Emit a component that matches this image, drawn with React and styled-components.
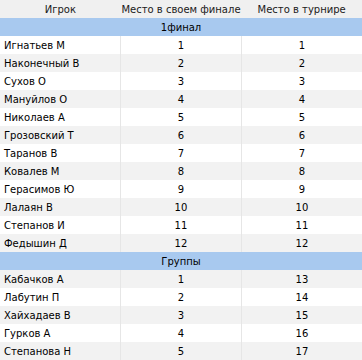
import React from "react";
import styled, { createGlobalStyle } from "styled-components";

const Global = createGlobalStyle`
  body {
    margin: 0;
    background: #ffffff;
    font-family: "DejaVu Sans", Verdana, sans-serif;
    font-size: 10px;
    color: #000000;
  }
`;

const Table = styled.table`
  width: 362px;
  border-collapse: collapse;
  table-layout: fixed;
`;

const HeadCell = styled.th`
  height: 18px;
  padding: 0;
  background: #f0f0f0;
  font-weight: normal;
  text-align: center;
  color: #1a1a1a;
`;

const Row = styled.tr`
  background: ${(p) => (p.$gray ? "#f2f2f2" : "#ffffff")};
`;

const SectionRow = styled.tr`
  background: #a8c9ef;
`;

const SectionCell = styled.td`
  height: 18px;
  padding: 0;
  text-align: center;
`;

const Cell = styled.td`
  height: 18px;
  padding: 0 4px;
  text-align: ${(p) => (p.$left ? "left" : "center")};
  border-left: ${(p) => (p.$first ? "none" : "1px solid #e6e6e6")};
  white-space: nowrap;
`;

const finalRows = [
  ["Игнатьев М", 1, 1],
  ["Наконечный В", 2, 2],
  ["Сухов О", 3, 3],
  ["Мануйлов О", 4, 4],
  ["Николаев А", 5, 5],
  ["Грозовский Т", 6, 6],
  ["Таранов В", 7, 7],
  ["Ковалев М", 8, 8],
  ["Герасимов Ю", 9, 9],
  ["Лалаян В", 10, 10],
  ["Степанов И", 11, 11],
  ["Федышин Д", 12, 12],
];

const groupRows = [
  ["Кабачков А", 1, 13],
  ["Лабутин П", 2, 14],
  ["Хайхадаев В", 3, 15],
  ["Гурков А", 4, 16],
  ["Степанова Н", 5, 17],
];

function renderRows(rows, offset) {
  return rows.map((r, i) => (
    <Row key={r[0]} $gray={(i + offset) % 2 === 1}>
      <Cell $left $first>{r[0]}</Cell>
      <Cell>{r[1]}</Cell>
      <Cell>{r[2]}</Cell>
    </Row>
  ));
}

export default function App() {
  return (
    <>
      <Global />
      <Table>
        <thead>
          <tr>
            <HeadCell>Игрок</HeadCell>
            <HeadCell>Место в своем финале</HeadCell>
            <HeadCell>Место в турнире</HeadCell>
          </tr>
        </thead>
        <tbody>
          <SectionRow>
            <SectionCell colSpan={3}>1финал</SectionCell>
          </SectionRow>
          {renderRows(finalRows, 0)}
          <SectionRow>
            <SectionCell colSpan={3}>Группы</SectionCell>
          </SectionRow>
          {renderRows(groupRows, 1)}
        </tbody>
      </Table>
    </>
  );
}
